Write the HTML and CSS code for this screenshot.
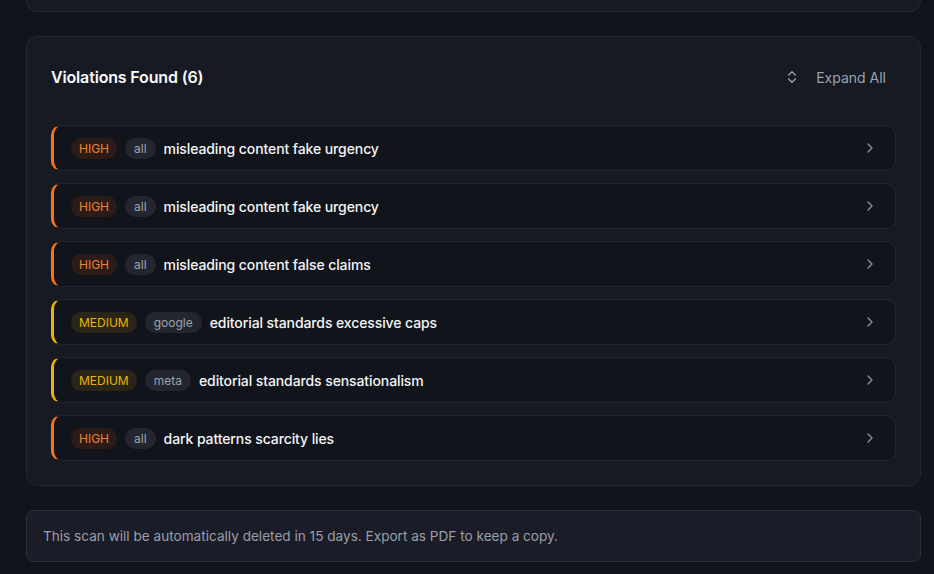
FILE: index.html
```html
<!DOCTYPE html>
<html lang="en">
<head>
    <meta charset="UTF-8">
    <meta name="viewport" content="width=device-width, initial-scale=1.0">
    <title>Scan Results</title>
    <link rel="stylesheet" href="styles.css">
</head>
<body>
    <div class="page">
        <div class="card card-prev"></div>

        <div class="card violations">
            <div class="violations-header">
                <h2>Violations Found (6)</h2>
                <button class="expand-btn">
                    <svg width="16" height="16" viewBox="0 0 24 24" fill="none" stroke="currentColor" stroke-width="2" stroke-linecap="round" stroke-linejoin="round"><path d="m7 15 5 5 5-5"/><path d="m7 9 5-5 5 5"/></svg>
                    Expand All
                </button>
            </div>

            <div class="violation-list">
                <div class="violation high">
                    <span class="badge severity">HIGH</span>
                    <span class="badge platform">all</span>
                    <span class="violation-title">misleading content fake urgency</span>
                    <svg class="chevron" width="16" height="16" viewBox="0 0 24 24" fill="none" stroke="currentColor" stroke-width="2" stroke-linecap="round" stroke-linejoin="round"><path d="m9 18 6-6-6-6"/></svg>
                </div>
                <div class="violation high">
                    <span class="badge severity">HIGH</span>
                    <span class="badge platform">all</span>
                    <span class="violation-title">misleading content fake urgency</span>
                    <svg class="chevron" width="16" height="16" viewBox="0 0 24 24" fill="none" stroke="currentColor" stroke-width="2" stroke-linecap="round" stroke-linejoin="round"><path d="m9 18 6-6-6-6"/></svg>
                </div>
                <div class="violation high">
                    <span class="badge severity">HIGH</span>
                    <span class="badge platform">all</span>
                    <span class="violation-title">misleading content false claims</span>
                    <svg class="chevron" width="16" height="16" viewBox="0 0 24 24" fill="none" stroke="currentColor" stroke-width="2" stroke-linecap="round" stroke-linejoin="round"><path d="m9 18 6-6-6-6"/></svg>
                </div>
                <div class="violation medium">
                    <span class="badge severity">MEDIUM</span>
                    <span class="badge platform">google</span>
                    <span class="violation-title">editorial standards excessive caps</span>
                    <svg class="chevron" width="16" height="16" viewBox="0 0 24 24" fill="none" stroke="currentColor" stroke-width="2" stroke-linecap="round" stroke-linejoin="round"><path d="m9 18 6-6-6-6"/></svg>
                </div>
                <div class="violation medium">
                    <span class="badge severity">MEDIUM</span>
                    <span class="badge platform">meta</span>
                    <span class="violation-title">editorial standards sensationalism</span>
                    <svg class="chevron" width="16" height="16" viewBox="0 0 24 24" fill="none" stroke="currentColor" stroke-width="2" stroke-linecap="round" stroke-linejoin="round"><path d="m9 18 6-6-6-6"/></svg>
                </div>
                <div class="violation high">
                    <span class="badge severity">HIGH</span>
                    <span class="badge platform">all</span>
                    <span class="violation-title">dark patterns scarcity lies</span>
                    <svg class="chevron" width="16" height="16" viewBox="0 0 24 24" fill="none" stroke="currentColor" stroke-width="2" stroke-linecap="round" stroke-linejoin="round"><path d="m9 18 6-6-6-6"/></svg>
                </div>
            </div>
        </div>

        <div class="retention-note">
            This scan will be automatically deleted in 15 days. Export as PDF to keep a copy.
        </div>
    </div>
</body>
</html>
```

FILE: styles.css
```css
* {
    box-sizing: border-box;
}

body {
    margin: 0;
    font-family: Inter, "Noto Sans", sans-serif;
    background-color: #12141b;
    color: #f3f4f6;
}

.page {
    display: flex;
    flex-direction: column;
    gap: 24px;
    padding: 0 13px 24px 26px;
}

.card {
    background-color: #171a23;
    border: 1px solid #242834;
    border-radius: 12px;
}

.card-prev {
    height: 12px;
    border-top: none;
    border-radius: 0 0 12px 12px;
}

.violations {
    padding: 24px;
}

.violations-header {
    display: flex;
    justify-content: space-between;
    align-items: center;
    height: 32px;
    margin-bottom: 32px;
}

.violations-header h2 {
    margin: 0;
    font-size: 16px;
    font-weight: 600;
    letter-spacing: -0.01em;
    color: #f9fafb;
}

.expand-btn {
    display: flex;
    align-items: center;
    gap: 16px;
    padding: 8px 10px 8px 12px;
    background: none;
    border: none;
    font-family: inherit;
    font-size: 14px;
    font-weight: 400;
    color: #9ca3af;
    cursor: pointer;
}

.violation-list {
    display: flex;
    flex-direction: column;
    gap: 12px;
}

.violation {
    display: flex;
    align-items: center;
    gap: 8px;
    height: 46px;
    padding: 0 17px;
    background-color: #12141b;
    border: 1px solid #22252f;
    border-left: 3px solid #f97316;
    border-radius: 10px;
}

.violation.medium {
    border-left-color: #eab308;
}

.badge {
    display: inline-flex;
    align-items: center;
    height: 21px;
    padding: 0 8px;
    border-radius: 11px;
    font-size: 12px;
    font-weight: 400;
}

.high .severity {
    background-color: #2c1c17;
    color: #f0822e;
}

.medium .severity {
    background-color: #2a2516;
    color: #eab308;
}

.platform {
    padding: 0 9px;
    background-color: #23262f;
    color: #9ca3af;
}

.violation-title {
    flex: 1;
    font-size: 14px;
    font-weight: 500;
    letter-spacing: -0.1px;
    color: #f3f4f6;
}

.chevron {
    color: #8b8f9a;
}

.retention-note {
    padding: 17px 16px;
    background-color: #1a1d27;
    border: 1px solid #2c303c;
    border-radius: 8px;
    font-size: 13.6px;
    color: #9a9ea8;
}
```
